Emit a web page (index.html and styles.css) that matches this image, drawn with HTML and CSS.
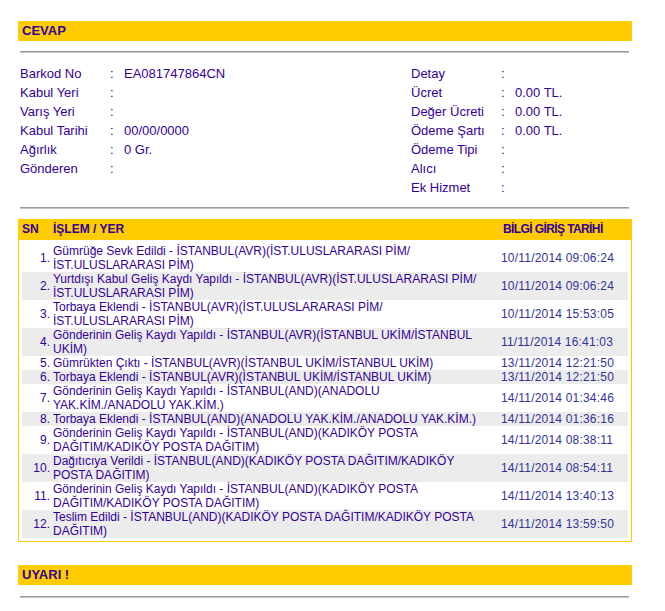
FILE: index.html
```html
<!DOCTYPE html>
<html lang="tr">
<head>
<meta charset="utf-8">
<title>Gönderi Takip</title>
<link rel="stylesheet" href="styles.css">
</head>
<body>
<div class="page">
  <div class="bar">CEVAP</div>
  <div class="rule"></div>

  <div class="info">
    <div class="info-col">
      <span class="lbl">Barkod No</span><span class="col">:</span><span class="val">EA081747864CN</span>
      <span class="lbl">Kabul Yeri</span><span class="col">:</span><span class="val"></span>
      <span class="lbl">Varış Yeri</span><span class="col">:</span><span class="val"></span>
      <span class="lbl">Kabul Tarihi</span><span class="col">:</span><span class="val">00/00/0000</span>
      <span class="lbl">Ağırlık</span><span class="col">:</span><span class="val">0 Gr.</span>
      <span class="lbl">Gönderen</span><span class="col">:</span><span class="val"></span>
    </div>
    <div class="info-col">
      <span class="lbl">Detay</span><span class="col">:</span><span class="val"></span>
      <span class="lbl">Ücret</span><span class="col">:</span><span class="val">0.00 TL.</span>
      <span class="lbl">Değer Ücreti</span><span class="col">:</span><span class="val">0.00 TL.</span>
      <span class="lbl">Ödeme Şartı</span><span class="col">:</span><span class="val">0.00 TL.</span>
      <span class="lbl">Ödeme Tipi</span><span class="col">:</span><span class="val"></span>
      <span class="lbl">Alıcı</span><span class="col">:</span><span class="val"></span>
      <span class="lbl">Ek Hizmet</span><span class="col">:</span><span class="val"></span>
    </div>
  </div>

  <div class="rule rule-2"></div>

  <div class="track">
    <div class="track-head">
      <span class="h-sn">SN</span>
      <span class="h-ev">İŞLEM / YER</span>
      <span class="h-dt">BİLGİ GİRİŞ TARİHİ</span>
    </div>
    <div class="track-body">
      <div class="row"><span class="sn">1.</span><span class="ev">Gümrüğe Sevk Edildi - İSTANBUL(AVR)(İST.ULUSLARARASI PİM/<br>İST.ULUSLARARASI PİM)</span><span class="dt">10/11/2014 09:06:24</span></div>
      <div class="row alt"><span class="sn">2.</span><span class="ev">Yurtdışı Kabul Geliş Kaydı Yapıldı - İSTANBUL(AVR)(İST.ULUSLARARASI PİM/<br>İST.ULUSLARARASI PİM)</span><span class="dt">10/11/2014 09:06:24</span></div>
      <div class="row"><span class="sn">3.</span><span class="ev">Torbaya Eklendi - İSTANBUL(AVR)(İST.ULUSLARARASI PİM/<br>İST.ULUSLARARASI PİM)</span><span class="dt">10/11/2014 15:53:05</span></div>
      <div class="row alt"><span class="sn">4.</span><span class="ev">Gönderinin Geliş Kaydı Yapıldı - İSTANBUL(AVR)(İSTANBUL UKİM/İSTANBUL<br>UKİM)</span><span class="dt">11/11/2014 16:41:03</span></div>
      <div class="row"><span class="sn">5.</span><span class="ev">Gümrükten Çıktı - İSTANBUL(AVR)(İSTANBUL UKİM/İSTANBUL UKİM)</span><span class="dt">13/11/2014 12:21:50</span></div>
      <div class="row alt"><span class="sn">6.</span><span class="ev">Torbaya Eklendi - İSTANBUL(AVR)(İSTANBUL UKİM/İSTANBUL UKİM)</span><span class="dt">13/11/2014 12:21:50</span></div>
      <div class="row"><span class="sn">7.</span><span class="ev">Gönderinin Geliş Kaydı Yapıldı - İSTANBUL(AND)(ANADOLU<br>YAK.KİM./ANADOLU YAK.KİM.)</span><span class="dt">14/11/2014 01:34:46</span></div>
      <div class="row alt"><span class="sn">8.</span><span class="ev">Torbaya Eklendi - İSTANBUL(AND)(ANADOLU YAK.KİM./ANADOLU YAK.KİM.)</span><span class="dt">14/11/2014 01:36:16</span></div>
      <div class="row"><span class="sn">9.</span><span class="ev">Gönderinin Geliş Kaydı Yapıldı - İSTANBUL(AND)(KADIKÖY POSTA<br>DAĞITIM/KADIKÖY POSTA DAĞITIM)</span><span class="dt">14/11/2014 08:38:11</span></div>
      <div class="row alt"><span class="sn">10.</span><span class="ev">Dağıtıcıya Verildi - İSTANBUL(AND)(KADIKÖY POSTA DAĞITIM/KADIKÖY<br>POSTA DAĞITIM)</span><span class="dt">14/11/2014 08:54:11</span></div>
      <div class="row"><span class="sn">11.</span><span class="ev">Gönderinin Geliş Kaydı Yapıldı - İSTANBUL(AND)(KADIKÖY POSTA<br>DAĞITIM/KADIKÖY POSTA DAĞITIM)</span><span class="dt">14/11/2014 13:40:13</span></div>
      <div class="row alt"><span class="sn">12.</span><span class="ev">Teslim Edildi - İSTANBUL(AND)(KADIKÖY POSTA DAĞITIM/KADIKÖY POSTA<br>DAĞITIM)</span><span class="dt">14/11/2014 13:59:50</span></div>
    </div>
  </div>

  <div class="bar bar-warn">UYARI !</div>
  <div class="rule rule-3"></div>
</div>
</body>
</html>
```

FILE: styles.css
```css
html, body {
  margin: 0;
  padding: 0;
  background: #ffffff;
}

body {
  font-family: "Liberation Sans", Arial, sans-serif;
  color: #330099;
}

.page {
  width: 614px;
  margin-left: 18px;
  padding-top: 21px;
}

.bar {
  background: #ffcc00;
  height: 20px;
  line-height: 20px;
  padding-left: 4px;
  font-size: 13px;
  font-weight: bold;
  color: #330099;
}

.bar-warn {
  margin-top: 23px;
}

.rule {
  height: 0;
  margin: 10px 3px 0 2px;
  border-top: 1px solid #9a9a9a;
  border-bottom: 1px solid #c4c4c4;
}

.rule-2 {
  margin-top: 10px;
}

.rule-3 {
  margin-top: 11px;
}

.info {
  display: grid;
  grid-template-columns: 391px 1fr;
  margin-top: 11px;
  padding-left: 2px;
  font-size: 13px;
}

.info-col {
  display: grid;
  grid-template-columns: 90px 14px 1fr;
  grid-auto-rows: 19px;
  align-items: center;
}

.track {
  margin-top: 10px;
  font-size: 12px;
}

.track-head {
  display: grid;
  grid-template-columns: 31px 450px 1fr;
  background: #ffcc00;
  height: 20px;
  line-height: 20px;
  padding-left: 4px;
  font-weight: bold;
  color: #330099;
}

.h-dt {
  letter-spacing: -0.6px;
}

.track-body {
  border: 1px solid #ffcc00;
  padding: 4px 3px 3px 3px;
}

.row {
  display: grid;
  grid-template-columns: 28px 445px 1fr;
  column-gap: 3px;
  align-items: center;
  line-height: 14px;
  background: #ffffff;
}

.row.alt {
  background: #ececec;
}

.sn {
  text-align: right;
}

.ev {
  color: #330099;
}

.dt {
  color: #333399;
  white-space: nowrap;
  letter-spacing: 0.2px;
}
```
